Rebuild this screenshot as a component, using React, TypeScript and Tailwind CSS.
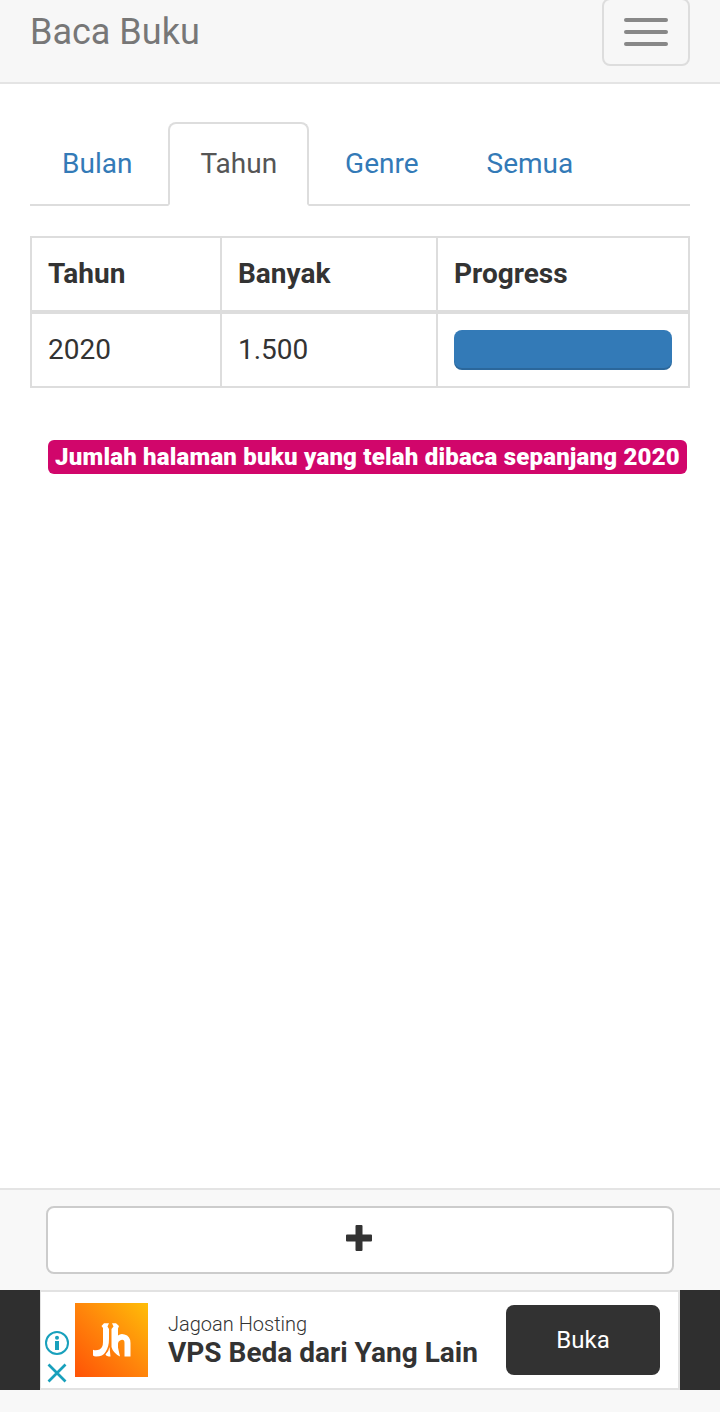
import React from "react";

const tabs = ["Bulan", "Tahun", "Genre", "Semua"];

function Navbar() {
  return (
    <header className="flex h-[84px] shrink-0 items-start justify-between border-b-2 border-[#e4e4e4] bg-[#f7f7f7] px-[30px]">
      <span className="pt-[12px] text-[36px] leading-[40px] text-[#777]">Baca Buku</span>
      <button
        aria-label="Menu"
        className="-mt-[2px] flex h-[68px] w-[88px] flex-col items-center justify-center gap-2 rounded-lg border-2 border-[#ddd]"
      >
        <span className="h-1 w-11 rounded-[2px] bg-[#888]" />
        <span className="h-1 w-11 rounded-[2px] bg-[#888]" />
        <span className="h-1 w-11 rounded-[2px] bg-[#888]" />
      </button>
    </header>
  );
}

function Tabs() {
  return (
    <nav className="flex h-[84px] border-b-2 border-[#ddd]">
      {tabs.map((tab) => (
        <a
          key={tab}
          className={
            tab === "Tahun"
              ? "mr-1 h-[84px] rounded-t-lg border-2 border-[#ddd] border-b-white bg-white px-[30px] py-5 leading-10 text-[#555]"
              : "mr-1 h-[84px] border-2 border-transparent px-[30px] py-5 leading-10 text-[#337ab7]"
          }
        >
          {tab}
        </a>
      ))}
    </nav>
  );
}

function YearTable() {
  return (
    <table className="mt-[30px] w-[660px] table-fixed border-separate border-spacing-0 border-2 border-[#ddd] text-left leading-10">
      <thead>
        <tr>
          <th className="h-[76px] w-[190px] border-r-2 border-b-4 border-[#ddd] px-4 py-0 font-bold">Tahun</th>
          <th className="w-[216px] border-r-2 border-b-4 border-[#ddd] px-4 py-0 font-bold">Banyak</th>
          <th className="border-b-4 border-[#ddd] px-4 py-0 font-bold">Progress</th>
        </tr>
      </thead>
      <tbody>
        <tr>
          <td className="h-[72px] border-r-2 border-[#ddd] px-4 py-0">2020</td>
          <td className="border-r-2 border-[#ddd] px-4 py-0">1.500</td>
          <td className="px-4 py-0">
            <div className="h-10 rounded-lg bg-[#337ab7] shadow-[inset_0_-2px_0_rgba(0,0,0,0.15)]" />
          </td>
        </tr>
      </tbody>
    </table>
  );
}

function AdBanner() {
  return (
    <div className="flex h-[100px] bg-[#2f2f2f] px-10">
      <div className="flex flex-1 border-2 border-l border-[#e2e2e2] bg-white">
        <div className="flex w-[34px] flex-col items-center pt-[39px] pr-[2px]">
          <svg width="24" height="24" viewBox="0 0 24 24" fill="none">
            <circle cx="12" cy="12" r="11" stroke="#18a0bc" strokeWidth="2" />
            <circle cx="12" cy="6.700" r="2" fill="#18a0bc" />
            <path d="M10 10H14V19H10Z" fill="#18a0bc" />
          </svg>
          <svg className="mt-2" width="20" height="20" viewBox="0 0 20 20" fill="none">
            <path d="M1.500 1.500L18.500 18.500M18.500 1.500L1.500 18.500" stroke="#18a0bc" strokeWidth="2.700" />
          </svg>
        </div>
        <svg className="mt-[11px]" width="73" height="74" viewBox="0 0 73 74">
          <defs>
            <linearGradient id="brand" x1="0" y1="1" x2="1" y2="0">
              <stop offset="0" stopColor="#ff5206" />
              <stop offset="0.5" stopColor="#ff850b" />
              <stop offset="1" stopColor="#ffbe08" />
            </linearGradient>
          </defs>
          <path d="M0 0H73V74H0Z" fill="url(#brand)" />
          <g fill="white">
            <path d="M26.500 23L29 20.300H34L32.500 23.500L34 26V36Q34 44 30.500 49Q28 53.500 21 53.500Q19 53.500 18 52.500V46.800Q21 48 24.500 46.500Q28 44.500 28 39V25Z" />
            <path d="M37 20.300H41L44 23L43 25.500V32.500Q46 30 49.500 31.500Q55.500 33 55.500 40V53.500H49.500V40Q49.500 36 46 37Q43 38 43 41V44.500L45 53.500Q38 50 36.500 44V26L38.500 23.500Z" />
            <path d="M34.500 44L35.500 53.500Q31.500 53.500 30.500 51.500Q34 48 34.500 44Z" />
          </g>
        </svg>
        <div className="ml-5 flex w-[338px] flex-col pt-[19px]">
          <span className="text-[20px] leading-[26px] font-light">Jagoan Hosting</span>
          <span className="text-[28px] leading-8 font-bold whitespace-nowrap">VPS Beda dari Yang Lain</span>
        </div>
        <button className="mt-[13px] h-[70px] w-[154px] rounded-lg bg-[#323232] text-[24px] text-white">Buka</button>
      </div>
    </div>
  );
}

export default function App() {
  return (
    <div className="flex h-[1412px] w-[720px] flex-col overflow-hidden bg-white font-[Roboto,sans-serif] text-[28px] text-[#333]">
      <Navbar />
      <main className="flex-1 px-[30px] pt-[38px]">
        <Tabs />
        <YearTable />
        <div className="mt-[52px] ml-[18px] flex h-[34px] w-[639px] items-center justify-center rounded-md bg-[#d1066b] text-[24px] leading-[34px] font-black tracking-[0.2px] whitespace-nowrap text-white">
          Jumlah halaman buku yang telah dibaca sepanjang 2020
        </div>
      </main>
      <footer className="h-[224px] shrink-0 border-t-2 border-[#e4e4e4] bg-[#f8f8f8]">
        <div className="flex h-[100px] px-[46px] pt-4">
          <button
            aria-label="Tambah"
            className="flex h-[68px] flex-1 items-center justify-center rounded-lg border-2 border-[#ccc] bg-white"
          >
            <svg className="mr-[2px] mb-1" width="26" height="26" viewBox="0 0 26 26" fill="#333">
              <path d="M10.500 0H15.500Q16.500 0 16.500 1V9.500H25Q26 9.500 26 10.500V15.500Q26 16.500 25 16.500H16.500V25Q16.500 26 15.500 26H10.500Q9.500 26 9.500 25V16.500H1Q0 16.500 0 15.500V10.500Q0 9.500 1 9.500H9.500V1Q9.500 0 10.500 0Z" />
            </svg>
          </button>
        </div>
        <AdBanner />
      </footer>
    </div>
  );
}
